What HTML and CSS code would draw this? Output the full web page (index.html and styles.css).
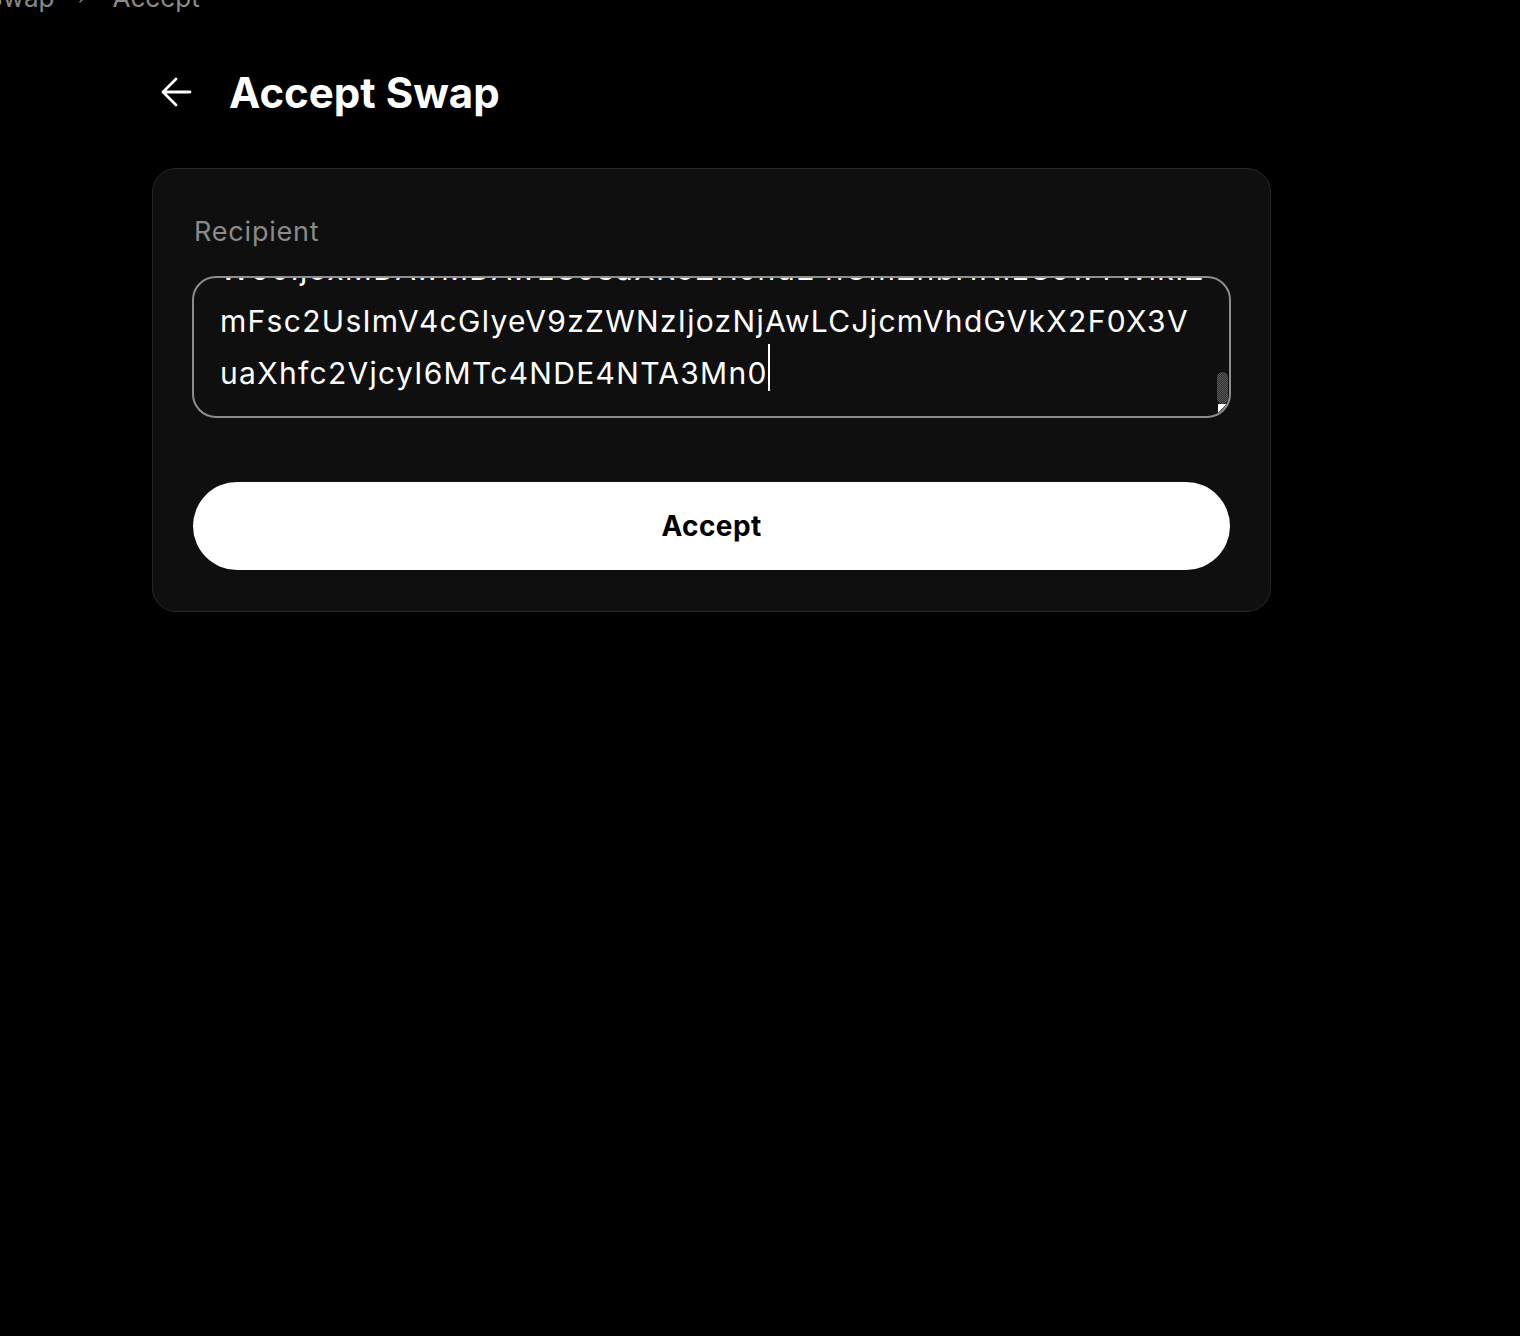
FILE: index.html
```html
<!DOCTYPE html>
<html lang="en">
<head>
    <meta charset="UTF-8">
    <title>Accept Swap</title>
    <link rel="stylesheet" href="styles.css">
</head>
<body>
    <nav class="breadcrumb">
        <span>Swap</span>
        <svg class="crumb-sep" width="14" height="14" viewBox="0 0 14 14" fill="none">
            <path d="M4 2l5 5-5 5" stroke="currentColor" stroke-width="1.6" stroke-linecap="round" stroke-linejoin="round"/>
        </svg>
        <span>Accept</span>
    </nav>

    <main class="content">
        <div class="page-header">
            <button class="back-btn" aria-label="Back">
                <svg width="32" height="32" viewBox="0 0 32 32" fill="none">
                    <path d="M30 16H3M16 3L3 16l13 13" stroke="#fff" stroke-width="2.8" stroke-linecap="round" stroke-linejoin="round"/>
                </svg>
            </button>
            <h1>Accept Swap</h1>
        </div>

        <div class="card">
            <label class="field-label" for="recipient">Recipient</label>
            <div class="field" id="recipient" role="textbox" aria-multiline="true">
                <div class="field-lines">
                    <div class="line">W50IjoxMDAwMDAwLCJ3aXRoZHJhd24iOmZhbHNlLCJwYWlkIZ</div>
                    <div class="line">mFsc2UsImV4cGlyeV9zZWNzIjozNjAwLCJjcmVhdGVkX2F0X3V</div>
                    <div class="line">uaXhfc2VjcyI6MTc4NDE4NTA3Mn0<span class="caret"></span></div>
                </div>
                <span class="scroll-thumb"></span>
                <span class="resize-grip"></span>
            </div>

            <button class="accept-btn">Accept</button>
        </div>
    </main>
</body>
</html>
```

FILE: styles.css
```css
body {
    font-family: Inter, 'Noto Sans', sans-serif;
    background-color: #000;
    color: #fff;
    margin: 0;
    overflow: hidden;
}

.breadcrumb {
    display: flex;
    align-items: center;
    gap: 22px;
    margin: -18px 0 0 -14px;
    height: 30px;
    font-size: 26px;
    color: #8a8a8a;
}

.crumb-sep {
    color: #777;
}

.content {
    width: 1119px;
    margin-left: 152px;
}

.page-header {
    display: flex;
    align-items: center;
    gap: 29px;
    margin-top: 56px;
    height: 48px;
}

.back-btn {
    background: none;
    border: none;
    padding: 8px;
    cursor: pointer;
    display: flex;
}

h1 {
    margin: 0;
    font-size: 42px;
    font-weight: 700;
}

.card {
    margin-top: 52px;
    background-color: #0f0f0f;
    border: 1px solid #262626;
    border-radius: 24px;
    padding: 40px 40px 41px;
}

.field-label {
    display: block;
    margin: 7px 0 0 1px;
    font-size: 27px;
    line-height: 32px;
    letter-spacing: 0.8px;
    color: #8a8a8a;
}

.field {
    position: relative;
    box-sizing: border-box;
    height: 142px;
    margin: 28px -1px 0;
    border: 2px solid #8d8d8d;
    border-radius: 24px;
    padding: 0 26px 17px;
    overflow: hidden;
    display: flex;
    flex-direction: column;
    justify-content: flex-end;
}

.field-lines {
    font-size: 30px;
    line-height: 52px;
    letter-spacing: 1.3px;
    white-space: nowrap;
}

.caret {
    display: inline-block;
    width: 2px;
    height: 47px;
    margin-top: -4px;
    vertical-align: -7px;
    background-color: #fff;
}

/* fake scrollbar thumb and resize corner of the text box */
.scroll-thumb {
    position: absolute;
    right: 1px;
    top: 94px;
    width: 11px;
    height: 32px;
    border-radius: 6px;
    background: repeating-conic-gradient(#5a5a5a 0 25%, #2e2e2e 0 50%) 0 0 / 2px 2px;
}

.resize-grip {
    position: absolute;
    right: 1px;
    bottom: 2px;
    width: 10px;
    height: 10px;
    background: linear-gradient(135deg, #fff 0 42%, #666 42% 58%, #fff 58% 100%);
}

.accept-btn {
    display: block;
    width: 100%;
    height: 88px;
    margin-top: 64px;
    background-color: #fff;
    color: #000;
    border: none;
    border-radius: 44px;
    font-family: inherit;
    font-size: 28px;
    font-weight: 700;
    letter-spacing: 0.4px;
    cursor: pointer;
}
```
